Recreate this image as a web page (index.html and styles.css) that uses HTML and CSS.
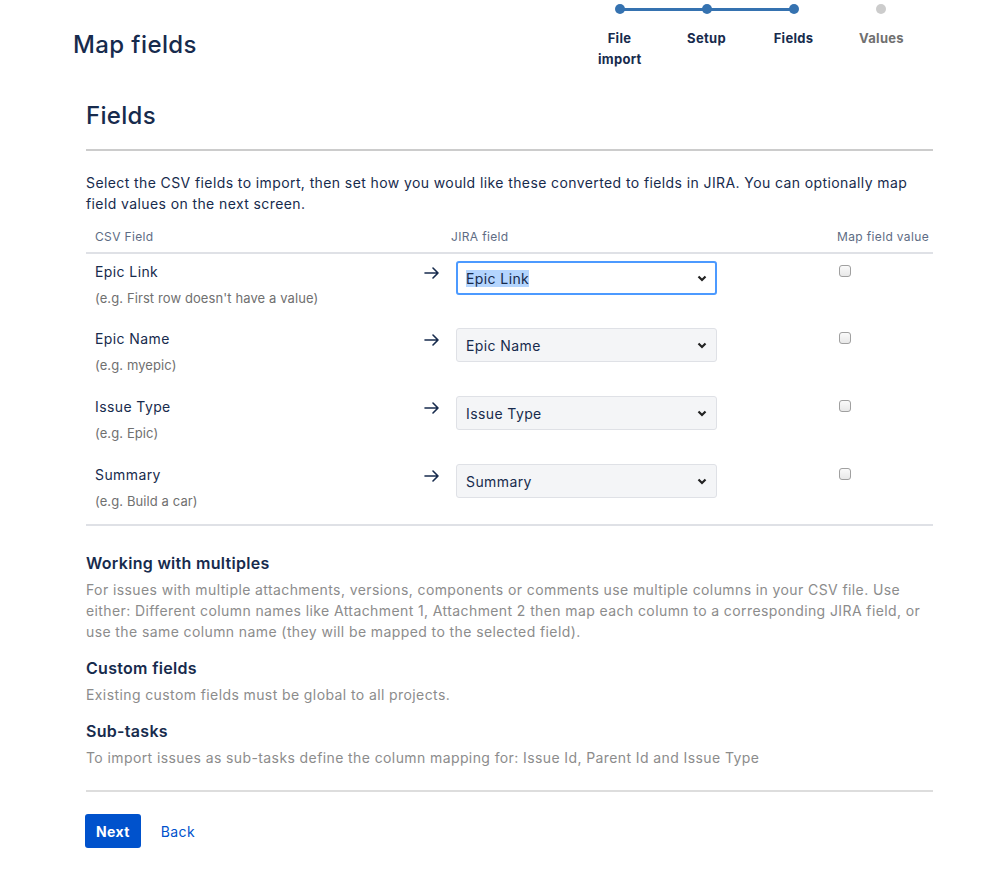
FILE: index.html
```html
<!DOCTYPE html>
<html>
<head>
<meta charset="utf-8">
<link rel="stylesheet" href="styles.css">
</head>
<body>
<div class="page">
  <header class="top">
    <h1 class="title">Map fields</h1>
    <ol class="tracker">
      <li class="step done first">File import</li>
      <li class="step done">Setup</li>
      <li class="step done current">Fields</li>
      <li class="step todo">Values</li>
    </ol>
  </header>

  <main class="content">
    <h2 class="section-title">Fields</h2>
    <p class="intro">Select the CSV fields to import, then set how you would like these converted to fields in JIRA. You can optionally map field values on the next screen.</p>

    <table class="map">
      <colgroup>
        <col class="w-csv"><col class="w-arrow"><col class="w-jira"><col class="w-map">
      </colgroup>
      <thead>
        <tr>
          <th class="c-csv">CSV Field</th>
          <th class="c-arrow"></th>
          <th class="c-jira">JIRA field</th>
          <th class="c-map">Map field value</th>
        </tr>
      </thead>
      <tbody>
        <tr>
          <td class="c-csv"><div class="name">Epic Link</div><div class="hint">(e.g. First row doesn't have a value)</div></td>
          <td class="c-arrow"><svg class="arrow" width="16" height="12" viewBox="0 0 16 12"><path d="M1 6h13M9 1l5 5-5 5" fill="none" stroke="#172b4d" stroke-width="1.6" stroke-linecap="round" stroke-linejoin="round"/></svg></td>
          <td class="c-jira"><div class="select focused"><span class="sel-text">Epic Link</span><svg class="chev" width="10" height="7" viewBox="0 0 10 7"><path d="M1.5 1.5L5 5l3.5-3.5" fill="none" stroke="#222" stroke-width="2.2"/></svg></div></td>
          <td class="c-map"><span class="check"></span></td>
        </tr>
        <tr>
          <td class="c-csv"><div class="name">Epic Name</div><div class="hint">(e.g. myepic)</div></td>
          <td class="c-arrow"><svg class="arrow" width="16" height="12" viewBox="0 0 16 12"><path d="M1 6h13M9 1l5 5-5 5" fill="none" stroke="#172b4d" stroke-width="1.6" stroke-linecap="round" stroke-linejoin="round"/></svg></td>
          <td class="c-jira"><div class="select"><span>Epic Name</span><svg class="chev" width="10" height="7" viewBox="0 0 10 7"><path d="M1.5 1.5L5 5l3.5-3.5" fill="none" stroke="#222" stroke-width="2.2"/></svg></div></td>
          <td class="c-map"><span class="check"></span></td>
        </tr>
        <tr>
          <td class="c-csv"><div class="name">Issue Type</div><div class="hint">(e.g. Epic)</div></td>
          <td class="c-arrow"><svg class="arrow" width="16" height="12" viewBox="0 0 16 12"><path d="M1 6h13M9 1l5 5-5 5" fill="none" stroke="#172b4d" stroke-width="1.6" stroke-linecap="round" stroke-linejoin="round"/></svg></td>
          <td class="c-jira"><div class="select"><span>Issue Type</span><svg class="chev" width="10" height="7" viewBox="0 0 10 7"><path d="M1.5 1.5L5 5l3.5-3.5" fill="none" stroke="#222" stroke-width="2.2"/></svg></div></td>
          <td class="c-map"><span class="check"></span></td>
        </tr>
        <tr>
          <td class="c-csv"><div class="name">Summary</div><div class="hint">(e.g. Build a car)</div></td>
          <td class="c-arrow"><svg class="arrow" width="16" height="12" viewBox="0 0 16 12"><path d="M1 6h13M9 1l5 5-5 5" fill="none" stroke="#172b4d" stroke-width="1.6" stroke-linecap="round" stroke-linejoin="round"/></svg></td>
          <td class="c-jira"><div class="select"><span>Summary</span><svg class="chev" width="10" height="7" viewBox="0 0 10 7"><path d="M1.5 1.5L5 5l3.5-3.5" fill="none" stroke="#222" stroke-width="2.2"/></svg></div></td>
          <td class="c-map"><span class="check"></span></td>
        </tr>
      </tbody>
    </table>

    <section class="help">
      <h3>Working with multiples</h3>
      <p>For issues with multiple attachments, versions, components or comments use multiple columns in your CSV file. Use either: Different column names like Attachment 1, Attachment 2 then map each column to a corresponding JIRA field, or use the same column name (they will be mapped to the selected field).</p>
      <h3>Custom fields</h3>
      <p>Existing custom fields must be global to all projects.</p>
      <h3>Sub-tasks</h3>
      <p>To import issues as sub-tasks define the column mapping for: Issue Id, Parent Id and Issue Type</p>
    </section>

    <div class="actions">
      <button class="btn-primary">Next</button>
      <a class="link" href="#">Back</a>
    </div>
  </main>
</div>
</body>
</html>
```

FILE: styles.css
```css
* { box-sizing: border-box; }
body {
  margin: 0;
  font-family: Inter, "Noto Sans", "Liberation Sans", sans-serif;
  color: #172b4d;
  background: #fff;
  font-size: 14px;
  letter-spacing: 0.4px;
}
.page {
  width: 999px;
  padding-left: 73px;
}
.top {
  display: flex;
  justify-content: space-between;
  align-items: flex-start;
  height: 82px;
}
.title {
  margin: 30px 0 0 0;
  font-size: 24px;
  line-height: 30px;
  font-weight: 500;
  letter-spacing: 0.4px;
  color: #172b4d;
}
.tracker {
  list-style: none;
  margin: 0;
  padding: 0;
  display: flex;
  margin-right: 75px;
}
.step {
  position: relative;
  width: 87px;
  text-align: center;
  padding-top: 28px;
  font-size: 13px;
  line-height: 21px;
  font-weight: 700;
  letter-spacing: 0.3px;
  color: #172b4d;
  padding-left: 22px;
  padding-right: 22px;
}
.step::before {
  content: "";
  position: absolute;
  top: 4px;
  left: 50%;
  margin-left: -5px;
  width: 10px;
  height: 10px;
  border-radius: 50%;
  background: #3572b0;
  z-index: 1;
}
.step.done:not(.current)::after {
  content: "";
  position: absolute;
  top: 7.5px;
  left: 50%;
  width: 87px;
  height: 3px;
  background: #3572b0;
}
.step.todo { color: #707070; }
.step.todo::before { background: #ccc; }

.content {
  width: 847px;
  margin-left: 13px;
}
.section-title {
  margin: 19px 0 0 0;
  font-size: 24px;
  line-height: 30px;
  font-weight: 500;
  letter-spacing: 0.3px;
  padding-bottom: 18px;
  border-bottom: 2px solid #ccc;
}
.intro {
  margin: 0;
  padding-top: 21px;
  line-height: 21px;
  font-size: 14px;
}
.map {
  width: 100%;
  table-layout: fixed;
  border-collapse: collapse;
  margin-top: 8px;
}
.w-csv { width: 334px; }
.w-arrow { width: 27px; }
.w-jira { width: 300px; }
.w-map { width: 186px; }
.map th {
  font-size: 12px;
  font-weight: 400;
  color: #5e6c84;
  text-align: left;
  line-height: 18px;
  padding: 6px 0 6px 0;
  white-space: nowrap;
  letter-spacing: 0.35px;
  border-bottom: 2px solid #dfe1e6;
}
.map th.c-csv { padding-left: 9px; }
.map th.c-jira { padding-left: 4px; }
.map th.c-map { text-align: right; padding-right: 4px; }
.map td {
  vertical-align: top;
  padding: 0;
  height: 68px;
}
.map td.c-csv { padding-left: 9px; }
.map td.c-arrow { padding-left: 4px; }
.map td.c-jira { padding-left: 9px; }
.map td.c-map { text-align: right; padding-right: 82px; }
.map tbody tr:last-child td { border-bottom: 2px solid #dfe1e6; }
.name {
  margin-top: 8px;
  font-size: 14px;
  line-height: 20px;
}
.hint {
  margin-top: 7px;
  font-size: 13px;
  line-height: 18px;
  letter-spacing: 0.1px;
  color: #707070;
}
.arrow {
  display: block;
  margin-top: 13px;
}
.select {
  margin-top: 7px;
  width: 261px;
  height: 34px;
  border: 1px solid #dfe1e6;
  border-radius: 3px;
  background: #f4f5f7;
  display: flex;
  align-items: center;
  justify-content: space-between;
  padding: 0 9px 0 9px;
  font-size: 14px;
  color: #172b4d;
}
.select.focused {
  background: #fff;
  border: 2px solid #4c9aff;
  padding: 0 8px 0 8px;
}
.sel-text { background: #b4d5fe; }
.check {
  display: inline-block;
  margin-top: 11px;
  width: 12px;
  height: 12px;
  border: 1px solid #a0a0a0;
  border-radius: 3px;
  background: linear-gradient(#fafafa, #e8e8e8);
}
.help h3 {
  margin: 0;
  font-size: 16px;
  line-height: 22px;
  font-weight: 600;
  letter-spacing: 0.3px;
  color: #172b4d;
}
.help h3:first-child { margin-top: 26px; }
.help p {
  margin: 5px 0 0 0;
  font-size: 14px;
  line-height: 21px;
  color: #8c8c8c;
}
.help p + h3 { margin-top: 15px; }
.actions {
  margin-top: 22px;
  border-top: 2px solid #ddd;
  padding-top: 22px;
  display: flex;
  align-items: center;
  gap: 20px;
}
.btn-primary {
  font-family: inherit;
  letter-spacing: 0.4px;
  background: #0052cc;
  color: #fff;
  border: none;
  border-radius: 3px;
  font-size: 14px;
  font-weight: 700;
  height: 34px;
  padding: 0 11px;
  margin-left: -1px;
}
.link {
  color: #0052cc;
  text-decoration: none;
  font-size: 14px;
}
```
